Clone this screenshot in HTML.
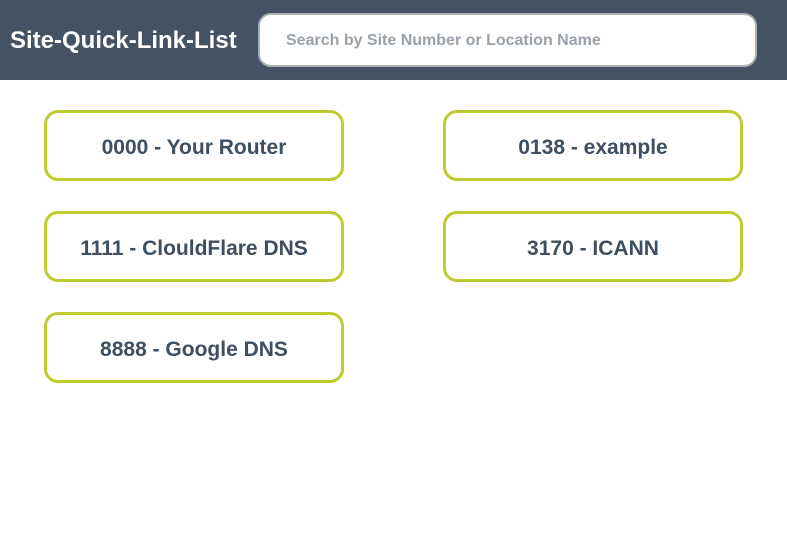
<!DOCTYPE html>
<html><head><style>
body{margin:0;width:787px;height:555px;background:#fff;font-family:"Liberation Sans",sans-serif;overflow:hidden;position:relative}
.hd{position:absolute;left:0;top:0;width:787px;height:80px;background:#435363}
.t{position:absolute;left:10px;top:27px;color:#fff;font-weight:bold;font-size:24px}
.s{position:absolute;left:258px;top:13px;width:495px;height:50px;background:#fff;border:2px solid #a9b0b6;border-radius:13px}
.s span{position:absolute;left:26px;top:17px;color:#9aa1a8;font-weight:bold;font-size:16px}
.c{position:absolute;width:294px;height:65px;border:3px solid #bfcc2e;border-radius:14px;color:#3d4f60;font-weight:bold;font-size:21px;text-align:center;line-height:69px;box-sizing:content-box}
</style></head><body>
<div class="hd"><div class="t">Site-Quick-Link-List</div><div class="s"><span>Search by Site Number or Location Name</span></div></div>
<div class="c" style="left:44px;top:110px">0000 - Your Router</div>
<div class="c" style="left:443px;top:110px">0138 - example</div>
<div class="c" style="left:44px;top:211px">1111 - ClouldFlare DNS</div>
<div class="c" style="left:443px;top:211px">3170 - ICANN</div>
<div class="c" style="left:44px;top:312px">8888 - Google DNS</div>
</body></html>
